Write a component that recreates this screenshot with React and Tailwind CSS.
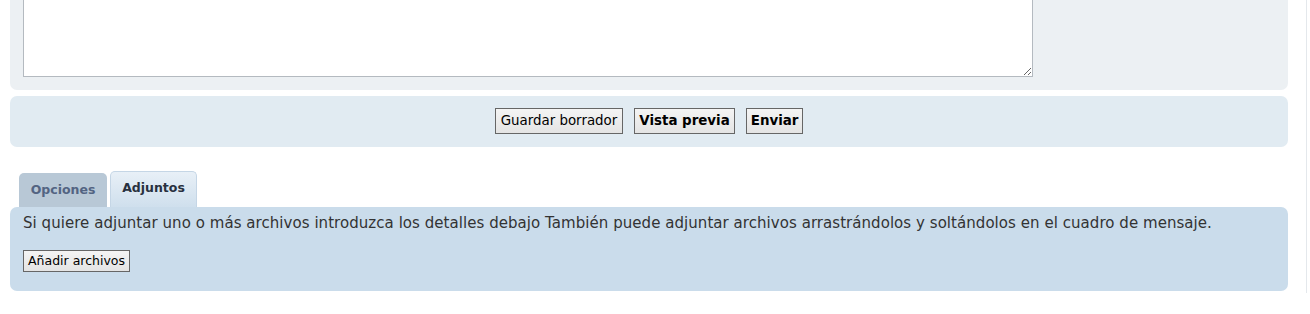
export default function App() {
  const font = { fontFamily: '"DejaVu Sans", Verdana, sans-serif' };
  return (
    <div className="w-[1310px] h-[314px] bg-white overflow-hidden" style={font}>
      <div className="w-[1307px] h-[314px] border-r border-[#e4e8ec]">
        <div className="w-[1298px] px-[10px]">
          {/* top panel with textarea */}
          <div className="-mt-[21px] bg-[#ecf0f3] rounded-[7px] pl-[13px] pt-[13px] pb-[13px] pr-[256px]">
            <textarea className="block w-[1010px] h-[85px] bg-white border border-[#b4bac0] resize-y outline-none" defaultValue="" />
          </div>
          {/* buttons panel */}
          <div className="mt-[6px] bg-[#e1ebf2] rounded-[7px] h-[51px] flex items-center justify-center gap-[11px] pb-[2px]">
            <button className="h-[26px] px-[5px] border border-[#666] bg-gradient-to-b from-[#f4f4f4] to-[#e4e4e4] text-[13.4px] text-[#000] leading-none">Guardar borrador</button>
            <button className="h-[26px] px-[4px] border border-[#666] bg-gradient-to-b from-[#f4f4f4] to-[#e4e4e4] text-[13.4px] font-bold text-[#000] leading-none">Vista previa</button>
            <button className="h-[26px] px-[4px] border border-[#666] bg-gradient-to-b from-[#f4f4f4] to-[#e4e4e4] text-[13.4px] font-bold text-[#000] leading-none">Enviar</button>
          </div>
          {/* tabs */}
          <div className="mt-[24px] flex items-end pl-[9px] gap-[3px] h-[36px]">
            <div className="w-[88px] h-[34px] bg-[#b8c8d6] rounded-t-[5px] flex items-center justify-center text-[12.5px] font-bold text-[#536482]">Opciones</div>
            <div className="w-[87px] h-[36px] rounded-t-[5px] border border-b-0 border-[#c5d6e6] bg-gradient-to-b from-[#e8f0f7] to-[#cfdfed] flex items-center justify-center text-[12.5px] font-bold text-[#28313f] pb-[2px]">Adjuntos</div>
          </div>
          <div className="bg-[#cadceb] rounded-[7px] h-[84px] px-[13px] pt-[7px]">
            <p className="text-[15px] text-[#333] leading-[19px] tracking-[0.05px] whitespace-nowrap">Si quiere adjuntar uno o más archivos introduzca los detalles debajo También puede adjuntar archivos arrastrándolos y soltándolos en el cuadro de mensaje.</p>
            <button className="mt-[17px] h-[22px] px-[4px] border border-[#666] bg-gradient-to-b from-[#f4f4f4] to-[#e4e4e4] text-[12.5px] text-[#000] leading-none">Añadir archivos</button>
          </div>
        </div>
      </div>
    </div>
  );
}
